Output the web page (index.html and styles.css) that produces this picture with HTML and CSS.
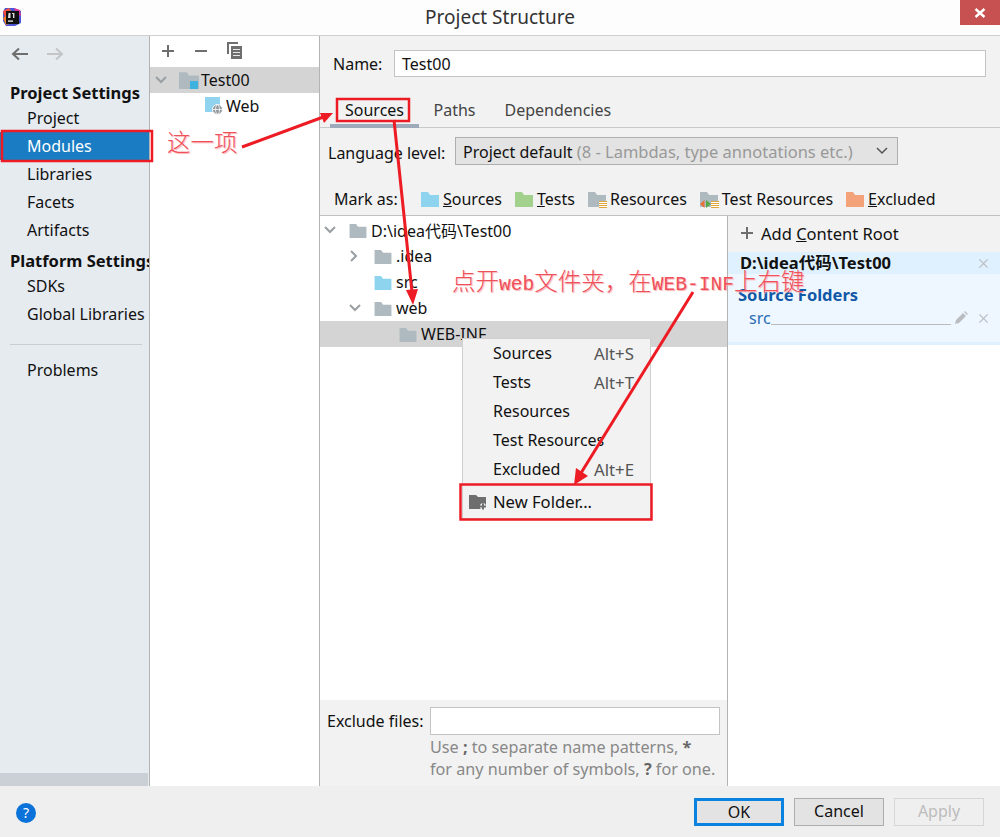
FILE: index.html
```html
<!DOCTYPE html>
<html lang="en">
<head>
<meta charset="utf-8">
<title>Project Structure</title>
<link rel="stylesheet" href="styles.css">
</head>
<body>
<svg class="defs" width="0" height="0" aria-hidden="true">
  <symbol id="folder" viewBox="0 0 18 16"><path d="M0 1h7l2 3h9v12H0z"/></symbol>
  <symbol id="chev-d" viewBox="0 0 12 8"><path d="M1 1l5 5 5-5" fill="none" stroke="#9a9fa3" stroke-width="2"/></symbol>
  <symbol id="chev-r" viewBox="0 0 8 12"><path d="M1 1l5 5-5 5" fill="none" stroke="#9a9fa3" stroke-width="2"/></symbol>
  <symbol id="cross" viewBox="0 0 12 12"><path d="M1.5 1.5l9 9M10.5 1.5l-9 9" fill="none" stroke="#b9bdc2" stroke-width="1.4"/></symbol>
</svg>
<div class="dialog">
  <header class="titlebar">
    <svg class="app-icon" viewBox="0 0 20 20" width="20" height="20">
      <path d="M3 1h9l7 3v12l-6 3H4l-3-5V5z" fill="#4a55d8"/>
      <path d="M1 4l6-3 3 4-7 6z" fill="#f0503c"/>
      <path d="M1 11l3-2 3 8-3 1z" fill="#f58220"/>
      <path d="M12 1l6 2 1 6-5-2z" fill="#d93a9a"/>
      <rect x="4" y="4" width="13" height="13" fill="#111"/>
      <rect x="6" y="13.5" width="5" height="1.2" fill="#fff"/>
      <path d="M6.5 6h2v5H6zM10 6h2.400v5H11V7h-1z" fill="#ddd"/>
    </svg>
    <h1 class="title">Project Structure</h1>
    <button class="close" type="button" aria-label="Close">
      <svg viewBox="0 0 12 10" width="12" height="10"><path d="M1.500 1l9 8M10.500 1l-9 8" stroke="#fff" stroke-width="2.400"/></svg>
    </button>
  </header>

  <main class="body">
    <nav class="sidebar">
      <div class="nav-arrows">
        <svg viewBox="0 0 18 14" width="18" height="14"><path d="M17 7H2M8 1.500L2 7l6 5.500" fill="none" stroke="#6e6e6e" stroke-width="2"/></svg>
        <svg viewBox="0 0 18 14" width="18" height="14"><path d="M1 7h15M10 1.500L16 7l-6 5.500" fill="none" stroke="#c3c5c7" stroke-width="2"/></svg>
      </div>
      <div class="nav-head first">Project Settings</div>
      <a class="nav-item">Project</a>
      <a class="nav-item selected">Modules</a>
      <a class="nav-item">Libraries</a>
      <a class="nav-item">Facets</a>
      <a class="nav-item">Artifacts</a>
      <div class="nav-head">Platform Settings</div>
      <a class="nav-item">SDKs</a>
      <a class="nav-item">Global Libraries</a>
      <hr class="nav-rule">
      <a class="nav-item">Problems</a>
      <div class="side-scroll"></div>
    </nav>

    <section class="modules">
      <div class="mod-toolbar">
        <svg viewBox="0 0 14 14" width="14" height="14"><path d="M7 1v12M1 7h12" stroke="#6e6e6e" stroke-width="2"/></svg>
        <svg viewBox="0 0 14 14" width="14" height="14"><path d="M1 7h12" stroke="#6e6e6e" stroke-width="2"/></svg>
        <svg viewBox="0 0 16 17" width="16" height="17"><path d="M1 12V1h10" fill="none" stroke="#6e6e6e" stroke-width="2"/><path d="M4 4h11v13H4z" fill="#6e6e6e"/><path d="M6 7.500h7M6 10.500h7M6 13.500h7" stroke="#e6e6e6"/></svg>
      </div>
      <div class="mod-row selected">
        <svg class="mod-chev" width="12" height="8"><use href="#chev-d"/></svg>
        <span class="mod-icon">
          <svg class="fold" width="20" height="18"><use href="#folder"/></svg>
          <span class="mod-badge"></span>
        </span>
        <span>Test00</span>
      </div>
      <div class="mod-row web">
        <svg viewBox="0 0 18 18" width="18" height="18"><rect x="0" y="0" width="15" height="15" fill="#8fd3ee"/><circle cx="12.500" cy="12.500" r="5" fill="#8d9499" stroke="#fff"/><ellipse cx="12.500" cy="12.500" rx="2" ry="4.500" fill="none" stroke="#fff" stroke-width=".8"/><path d="M8 12.500h9" stroke="#fff" stroke-width=".8"/></svg>
        <span>Web</span>
      </div>
    </section>

    <section class="content">
      <div class="name-row">
        <label class="name-label">Name:</label>
        <div class="field name-field">Test00</div>
      </div>
      <div class="tabs">
        <span class="tab active">Sources</span>
        <span class="tab">Paths</span>
        <span class="tab">Dependencies</span>
      </div>
      <div class="lang-row">
        <span class="lang-label">Language level:</span>
        <div class="combo">
          <span>Project default <span class="muted">(8 - Lambdas, type annotations etc.)</span></span>
          <svg viewBox="0 0 12 8" width="12" height="8"><path d="M1 1l5 5 5-5" fill="none" stroke="#555" stroke-width="1.500"/></svg>
        </div>
      </div>
      <div class="mark-row">
        <span class="mark-label">Mark as:</span>
        <span class="mark"><svg class="f-blue" width="18" height="16"><use href="#folder"/></svg><span><u>S</u>ources</span></span>
        <span class="mark"><svg class="f-green" width="18" height="16"><use href="#folder"/></svg><span><u>T</u>ests</span></span>
        <span class="mark"><svg class="f-grey" width="18" height="16"><use href="#folder"/></svg><i class="res-lines"></i><span>Resources</span></span>
        <span class="mark"><svg class="f-grey" width="18" height="16"><use href="#folder"/></svg><svg class="test-res" viewBox="0 0 11 8" width="11" height="8"><path d="M4.500 0v8L0 4z" fill="#e8703a"/><path d="M6 0v8l5-4z" fill="#58a846"/></svg><i class="res-lines"></i><span>Test Resources</span></span>
        <span class="mark"><svg class="f-orange" width="18" height="16"><use href="#folder"/></svg><span><u>E</u>xcluded</span></span>
      </div>

      <div class="split">
        <div class="tree-col">
          <div class="tree">
            <div class="row lvl1"><svg class="chev" width="12" height="8"><use href="#chev-d"/></svg><svg class="f-grey" width="18" height="15"><use href="#folder"/></svg><span>D:\idea代码\Test00</span></div>
            <div class="row lvl2"><svg class="chev" width="8" height="12"><use href="#chev-r"/></svg><svg class="f-grey" width="18" height="15"><use href="#folder"/></svg><span>.idea</span></div>
            <div class="row lvl2"><span class="chev"></span><svg class="f-blue" width="18" height="15"><use href="#folder"/></svg><span>src</span></div>
            <div class="row lvl2"><svg class="chev" width="12" height="8"><use href="#chev-d"/></svg><svg class="f-grey" width="18" height="15"><use href="#folder"/></svg><span>web</span></div>
            <div class="row lvl3 selected"><svg class="f-grey" width="18" height="15"><use href="#folder"/></svg><span>WEB-INF</span></div>
          </div>
          <div class="exclude">
            <div class="exclude-top">
              <label>Exclude files:</label>
              <div class="field exclude-field"></div>
            </div>
            <p class="hint">Use <b>;</b> to separate name patterns, <b>*</b><br>for any number of symbols, <b>?</b> for one.</p>
          </div>
        </div>
        <aside class="roots">
          <div class="add-root">
            <svg viewBox="0 0 12 12" width="12" height="12"><path d="M6 0v12M0 6h12" stroke="#6e6e6e" stroke-width="2"/></svg>
            <span>Add <u>C</u>ontent Root</span>
          </div>
          <div class="root-head"><b>D:\idea代码\Test00</b><svg width="11" height="11"><use href="#cross"/></svg></div>
          <div class="root-body">
            <div class="src-title">Source Folders</div>
            <div class="src-row">
              <span class="src-name">src</span>
              <span class="src-line"></span>
              <svg viewBox="0 0 14 14" width="14" height="14"><path d="M1 13l1-4 7-7 3 3-7 7zM10 1l1-1 3 3-1 1z" fill="#b9bdc2"/></svg>
              <svg width="11" height="11"><use href="#cross"/></svg>
            </div>
          </div>
        </aside>
      </div>
    </section>
  </main>

  <footer class="footer">
    <span class="help">?</span>
    <div class="buttons">
      <button class="btn default" type="button">OK</button>
      <button class="btn" type="button">Cancel</button>
      <button class="btn disabled" type="button">Apply</button>
    </div>
  </footer>

  <ul class="menu">
    <li><span>Sources</span><kbd>Alt+S</kbd></li>
    <li><span>Tests</span><kbd>Alt+T</kbd></li>
    <li><span>Resources</span></li>
    <li><span>Test Resources</span></li>
    <li><span>Excluded</span><kbd>Alt+E</kbd></li>
    <li class="new-folder">
      <svg viewBox="0 0 18 16" width="18" height="16"><path d="M0 1h7l2 2h8v8h-5v4H0z" fill="#6e6e6e"/><path d="M14 9.500v6M11 12.500h6" stroke="#f2f2f2" stroke-width="4"/><path d="M14 9.500v6M11 12.500h6" stroke="#6e6e6e" stroke-width="2"/></svg>
      <span>New Folder...</span>
    </li>
  </ul>

  <svg class="marks" viewBox="0 0 1000 837" width="1000" height="837" aria-hidden="true">
    <g fill="none" stroke="#ed1c24" stroke-width="2.500">
      <rect x="2" y="131" width="150" height="30"/>
      <rect x="337" y="99" width="72" height="22"/>
      <rect x="460.500" y="484.500" width="191" height="35"/>
    </g>
    <path d="M242 147L326 116M394 120L412 292M693 292L581 473" fill="none" stroke="#ed1c24" stroke-width="3"/>
    <g fill="#ed1c24">
      <path d="M333 113L320 113L324 123z"/>
      <path d="M413 305L406 290L418 289z"/>
      <path d="M574 485L576 468L588 476z"/>
    </g>
  </svg>
  <span class="note note-item">这一项</span>
  <span class="note note-hint">点开<span class="note-latin">web</span>文件夹，在<span class="note-latin">WEB-INF</span>上右键</span>
</div>
</body>
</html>
```
FILE: styles.css
```css
* { box-sizing: border-box; }
html, body { margin: 0; padding: 0; }
body {
  width: 1000px;
  height: 837px;
  overflow: hidden;
  font-family: "Noto Sans", "Noto Sans CJK SC", sans-serif;
  font-size: 16px;
  color: #111;
}
.defs { position: absolute; }
.dialog {
  position: relative;
  display: flex;
  flex-direction: column;
  width: 1000px;
  height: 837px;
  background: #f2f2f2;
}

/* title bar */
.titlebar {
  position: relative;
  flex: 0 0 36px;
  display: flex;
  align-items: center;
  justify-content: center;
  padding-bottom: 2px;
  background: #fdfdfd;
  border-bottom: 1px solid #d0d0d0;
}
.app-icon { position: absolute; left: 2px; top: 7px; }
.title { margin: 0; font-size: 19px; font-weight: 400; color: #333; }
.close {
  position: absolute;
  top: 0;
  right: 0;
  width: 40px;
  height: 25px;
  padding: 0;
  border: 0;
  background: #c75050;
  display: flex;
  align-items: center;
  justify-content: center;
}

/* layout */
.body { flex: 1; display: flex; min-height: 0; }

/* left navigation */
.sidebar {
  position: relative;
  flex: 0 0 150px;
  background: #e6ebf0;
  border-right: 1px solid #b3b3b3;
  overflow: hidden;
  white-space: nowrap;
}
.nav-arrows { display: flex; gap: 17px; padding: 11px 0 0 11px; height: 42px; }
.nav-head { height: 25px; line-height: 27px; padding-left: 10px; font-weight: 700; font-size: 16.500px; margin-top: 3px; }
.nav-head.first { margin-top: 1px; }
.nav-item { display: block; height: 28px; line-height: 28px; padding-left: 27px; }
.nav-item.selected { background: #1a7dc4; color: #fff; }
.nav-rule { margin: 16px 10px 11px; border: 0; border-top: 1px solid #c9ced3; width: 132px; }
.side-scroll { position: absolute; left: 0; right: 1px; bottom: 0; height: 13px; background: #cbd0d6; }

/* module list */
.modules { flex: 0 0 170px; background: #fff; border-right: 1px solid #b3b3b3; }
.mod-toolbar { height: 31px; display: flex; align-items: center; gap: 19px; padding: 0 0 2px 11px; }
.mod-row { height: 26px; display: flex; align-items: center; }
.mod-row.selected { background: #d4d4d4; }
.mod-chev { margin-left: 5px; margin-right: 12px; }
.mod-icon { position: relative; width: 22px; height: 18px; }
.fold { fill: #aeb9c0; }
.mod-badge { position: absolute; left: 11px; top: 10px; width: 8px; height: 8px; background: #3fb2e0; }
.mod-row.web { padding-left: 55px; gap: 3px; }

/* content */
.content { flex: 1; display: flex; flex-direction: column; min-width: 0; }
.name-row { height: 55px; display: flex; align-items: center; padding: 0 14px 0 13px; }
.name-label { width: 61px; }
.field { background: #fff; border: 1px solid #c4c4c4; }
.name-field { flex: 1; height: 27px; line-height: 26px; padding-left: 7px; }
.tabs { height: 37px; display: flex; padding-left: 10px; border-bottom: 1px solid #c9c9c9; }
.tab { height: 37px; line-height: 38px; padding: 0 14.500px; color: #444; }
.tab.active { color: #111; border-bottom: 4px solid #9eaaba; width: 89px; padding: 0 0 0 15px; }
.lang-row { height: 44px; display: flex; align-items: center; padding: 2px 0 0 8px; }
.lang-label { width: 127px; margin-top: 4px; }
.combo {
  width: 443px;
  height: 28px;
  display: flex;
  align-items: center;
  justify-content: space-between;
  padding: 0 9px 0 7px;
  background: #e3e3e3;
  border: 1px solid #aeaeae;
}
.muted { color: #999; font-size: 16.500px; }
.mark-row { height: 44px; display: flex; align-items: center; padding: 10px 0 0 14px; border-bottom: 1px solid #c0c0c0; }
.mark-label { width: 87px; }
.mark { position: relative; display: inline-flex; align-items: center; gap: 4px; margin-right: 13px; }
.f-blue { fill: #8ed4ef; }
.f-green { fill: #a2d18e; }
.f-grey { fill: #aeb9c0; }
.f-orange { fill: #f4a27a; }
.res-lines {
  position: absolute;
  left: 11px;
  bottom: 2px;
  width: 8px;
  height: 7px;
  background: repeating-linear-gradient(#e0a63c 0 1px, #fff 1px 2px);
}
.test-res { position: absolute; left: 0; bottom: 2px; }
.split { flex: 1; display: flex; min-height: 0; }
.tree-col { flex: 0 0 408px; display: flex; flex-direction: column; border-right: 1px solid #b3b3b3; }
.tree { flex: 1; background: #fff; padding-top: 1px; }
.row { height: 26px; display: flex; align-items: center; white-space: nowrap; }
.chev { width: 12px; flex: 0 0 auto; }
.lvl1 { padding-left: 4px; }
.lvl1 .chev { margin-right: 13px; }
.lvl1 .f-grey, .lvl2 svg:not(.chev), .lvl2 .f-blue { margin-right: 4px; }
.lvl2 { padding-left: 30px; }
.lvl2 .chev { margin-right: 12px; margin-left: 0; }
.lvl2 svg[width="12"].chev { margin-left: -1px; margin-right: 13px; }
.lvl2 svg[width="8"].chev { width: 8px; margin-right: 16px; }
.lvl3 { padding-left: 79px; gap: 4px; }
.row.selected { background: #d4d4d4; }
.exclude { flex: 0 0 86px; padding: 7px 7px 0 7px; }
.exclude-top { display: flex; align-items: center; }
.exclude-top label { width: 103px; }
.exclude-field { width: 290px; height: 28px; }
.hint { margin: 0; padding: 1px 0 0 103px; font-size: 16.200px; line-height: 22px; color: #888; white-space: nowrap; }
.hint b { color: #666; }
.roots { flex: 1; background: #fff; }
.add-root { height: 36px; background: #f2f2f2; display: flex; align-items: center; gap: 8px; padding: 0 0 2px 13px; font-size: 16.500px; }
.root-head { height: 22px; background: #dff1ff; display: flex; align-items: center; justify-content: space-between; padding: 0 11px 2px 12px; font-size: 16.500px; }
.root-head svg { margin-top: 2px; }
.root-body { height: 71px; background: #eef7ff; border-bottom: 3px solid #dff1ff; padding: 10px 11px 0 10px; }
.src-title { height: 21px; line-height: 21px; font-weight: 700; font-size: 16.500px; color: #1158a7; }
.src-row { height: 22px; margin-top: 2px; display: flex; align-items: center; padding-left: 11px; }
.src-name { color: #2b6cb5; }
.src-line { flex: 1; height: 14px; border-bottom: 1px solid #bbb; margin-right: 3px; }
.src-row svg:last-child { margin-left: 10px; }

/* footer */
.footer { flex: 0 0 51px; background: #efefef; display: flex; align-items: center; justify-content: space-between; padding: 0 16px; }
.help {
  width: 20px;
  height: 20px;
  margin-top: 3px;
  border-radius: 50%;
  background: #0a72d8;
  color: #fff;
  font-size: 14px;
  line-height: 20px;
  text-align: center;
}
.buttons { display: flex; gap: 10px; margin-top: 1px; }
.btn {
  width: 90px;
  height: 28px;
  padding: 0 0 2px;
  background: #e3e3e3;
  border: 1px solid #adadad;
  font: inherit;
  color: #111;
}
.btn.default { border: 3px solid #0a82e0; }
.btn.disabled { background: #efefef; border-color: #d6d6d6; color: #bcbcbc; }

/* context menu */
.menu {
  position: absolute;
  left: 462px;
  top: 338px;
  width: 189px;
  height: 181px;
  margin: 0;
  padding: 0;
  list-style: none;
  background: #f2f2f2;
  border: 1px solid #cfcfcf;
}
.menu li { position: relative; height: 29px; line-height: 29px; padding-left: 30px; white-space: nowrap; }
.menu kbd { position: absolute; left: 131px; top: 0; font: inherit; font-size: 16.800px; color: #555; }
.menu .new-folder { margin-top: 1px; height: 34px; line-height: 34px; padding-left: 6px; display: flex; align-items: center; gap: 6px; font-size: 16.600px; }

/* annotations over the screenshot */
.marks { position: absolute; left: 0; top: 0; pointer-events: none; }
.note {
  position: absolute;
  color: #f0505a;
  font-family: "Noto Sans CJK SC", serif;
  text-shadow: 1px 1px 1px #f7b0b4;
  white-space: nowrap;
  font-weight: 300;
}
.note-item { left: 167px; top: 125px; font-size: 23.500px; line-height: 32px; }
.note-hint { left: 452px; top: 265px; font-size: 23.500px; line-height: 30px; }
.note-latin { font-family: "Liberation Mono", monospace; font-size: 19.600px; }
```
